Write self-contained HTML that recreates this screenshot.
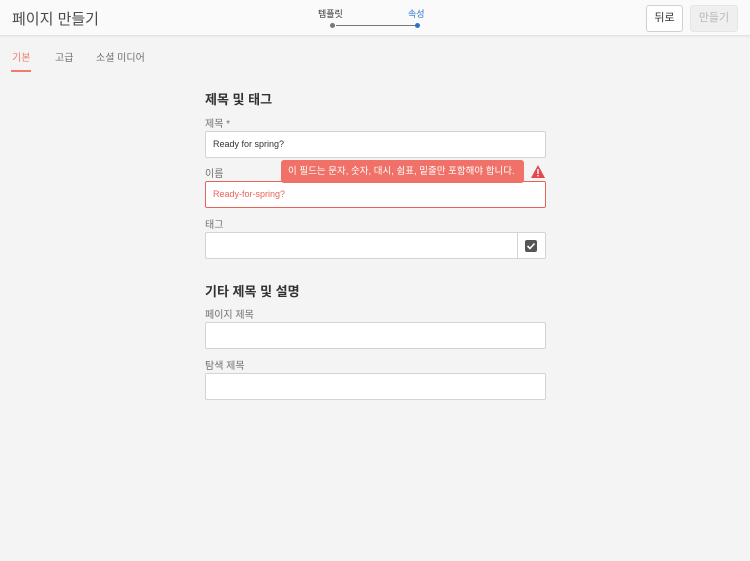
<!DOCTYPE html>
<html><head><meta charset="utf-8"><style>
*{box-sizing:border-box;margin:0;padding:0}
body{width:750px;height:561px;background:#f4f4f4;font-family:"Liberation Sans","Noto Sans CJK KR",sans-serif;color:#4b4b4b;position:relative;overflow:hidden}
.hdr{position:absolute;left:0;top:0;width:750px;height:36px;background:#fafafa;border-bottom:1px solid #e2e2e2;box-shadow:0 1px 2px rgba(0,0,0,.05)}
.t{position:absolute;left:12px;top:8px;font-size:15px;color:#4b4b4b}
.abs{position:absolute}
.btn{position:absolute;top:5px;height:27px;border:1px solid #d0d0d0;border-radius:3px;font-size:11px;text-align:center;line-height:25px;background:#fff}
.lbl{position:absolute;left:205px;font-size:10px;color:#707070}
.in{position:absolute;left:205px;width:341px;height:27px;background:#fff;border:1px solid #d3d3d3;border-radius:2px;font-size:9px;padding-left:7px;line-height:25px;color:#333}
h2{position:absolute;left:205px;font-size:13px;font-weight:bold;color:#323232}
</style></head><body>
<div class="hdr">
<div class="t">페이지 만들기</div>
<div class="abs" style="left:318px;top:7px;font-size:9px;color:#333">템플릿</div>
<div class="abs" style="left:408px;top:7px;font-size:9px;color:#2d72d2">속성</div>
<div class="abs" style="left:330px;top:23px;width:5px;height:5px;border-radius:50%;background:#777"></div>
<div class="abs" style="left:336px;top:25px;width:79px;height:1px;background:#777"></div>
<div class="abs" style="left:415px;top:23px;width:5px;height:5px;border-radius:50%;background:#2d72d2"></div>
<div class="btn" style="left:646px;width:37px;color:#333">뒤로</div>
<div class="btn" style="left:690px;width:48px;background:#efefef;border-color:#e6e6e6;color:#b8b8b8">만들기</div>
</div>
<div class="abs" style="left:12px;top:49px;font-size:10px;color:#f07b70">기본</div>
<div class="abs" style="left:11px;top:70px;width:20px;height:2px;background:#f07b70"></div>
<div class="abs" style="left:55px;top:49px;font-size:10px;color:#707070">고급</div>
<div class="abs" style="left:96px;top:49px;font-size:10px;color:#707070">소셜 미디어</div>
<h2 style="top:89px">제목 및 태그</h2>
<div class="lbl" style="top:115px">제목 *</div>
<div class="in" style="top:131px">Ready for spring?</div>
<div class="lbl" style="top:165px">이름</div>
<div class="in" style="top:181px;border:1px solid #e8635a;color:#e8635a">Ready-for-spring?</div>
<div class="abs" style="left:281px;top:160px;width:243px;height:23px;background:#f07167;border-radius:3px;color:#fff;font-size:9.5px;line-height:23px;padding-left:7px;white-space:nowrap">이 필드는 문자, 숫자, 대시, 쉼표, 밑줄만 포함해야 합니다.</div>
<svg class="abs" style="left:531px;top:165px" width="14" height="13" viewBox="0 0 14 13"><path d="M7 0L14 13H0Z" fill="#e34850"/><rect x="6.3" y="4" width="1.4" height="5" fill="#fff"/><rect x="6.3" y="10" width="1.4" height="1.4" fill="#fff"/></svg>
<div class="lbl" style="top:216px">태그</div>
<div class="in" style="top:232px"></div>
<div class="abs" style="left:517px;top:233px;width:1px;height:25px;background:#d3d3d3"></div>
<svg class="abs" style="left:525px;top:240px" width="12" height="12" viewBox="0 0 12 12"><rect width="12" height="12" rx="2" fill="#555"/><path d="M2.5 6l2.5 2.5 4.5-5" stroke="#fff" stroke-width="1.6" fill="none"/></svg>
<h2 style="top:281px">기타 제목 및 설명</h2>
<div class="lbl" style="top:306px">페이지 제목</div>
<div class="in" style="top:322px"></div>
<div class="lbl" style="top:357px">탐색 제목</div>
<div class="in" style="top:373px"></div>
</body></html>
